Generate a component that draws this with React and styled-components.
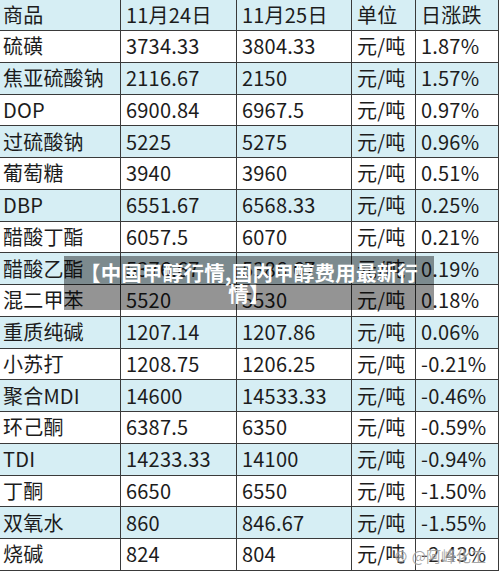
import React from "react";
import styled, { createGlobalStyle } from "styled-components";

const Global = createGlobalStyle`
  html, body { margin: 0; padding: 0; background: #ffffff; }
  body { width: 500px; height: 573px; overflow: hidden; }
`;

const Page = styled.div`
  position: relative;
  width: 500px;
  height: 573px;
  overflow: hidden;
  background: #ffffff;
  font-family: "Noto Sans CJK SC", "Noto Sans", sans-serif;
`;

const Table = styled.div`
  display: grid;
  grid-template-columns: 121px 116px 115px 64px 83px;
  grid-template-rows: 31px repeat(17, 31.75px);
`;

const Cell = styled.div`
  box-sizing: border-box;
  border-right: 1px solid #3a3a3a;
  border-bottom: 1px solid #3a3a3a;
  background: ${(p) => (p.$shade ? "#d6eef4" : "#ffffff")};
  color: #1c1c1c;
  font-size: 20px;
  line-height: 1;
  padding-left: ${(p) => (p.$first ? 3 : 5)}px;
  display: flex;
  align-items: center;
  white-space: nowrap;
  overflow: hidden;
  letter-spacing: 0.2px;
`;

const Overlay = styled.div`
  position: absolute;
  left: 64px;
  top: 256px;
  width: 370px;
  height: 54px;
  box-sizing: border-box;
  background: rgba(0, 0, 0, 0.42);
  color: #ffffff;
  font-weight: 700;
  font-size: 20.5px;
  line-height: 21px;
  text-align: center;
  padding-top: 6px;
  letter-spacing: 0.2px;
  white-space: nowrap;
`;

const Watermark = styled.div`
  position: absolute;
  right: 14px;
  top: 545px;
  font-size: 15px;
  color: rgba(140, 140, 140, 0.75);
  text-shadow: 0 0 2px rgba(255, 255, 255, 0.9);
  font-family: "Noto Sans CJK SC", sans-serif;
`;

const header = ["商品", "11月24日", "11月25日", "单位", "日涨跌"];
const rows = [
  ["硫磺", "3734.33", "3804.33", "元/吨", "1.87%"],
  ["焦亚硫酸钠", "2116.67", "2150", "元/吨", "1.57%"],
  ["DOP", "6900.84", "6967.5", "元/吨", "0.97%"],
  ["过硫酸钠", "5225", "5275", "元/吨", "0.96%"],
  ["葡萄糖", "3940", "3960", "元/吨", "0.51%"],
  ["DBP", "6551.67", "6568.33", "元/吨", "0.25%"],
  ["醋酸丁酯", "6057.5", "6070", "元/吨", "0.21%"],
  ["醋酸乙酯", "5376.67", "5386.67", "元/吨", "0.19%"],
  ["混二甲苯", "5520", "5530", "元/吨", "0.18%"],
  ["重质纯碱", "1207.14", "1207.86", "元/吨", "0.06%"],
  ["小苏打", "1208.75", "1206.25", "元/吨", "-0.21%"],
  ["聚合MDI", "14600", "14533.33", "元/吨", "-0.46%"],
  ["环己酮", "6387.5", "6350", "元/吨", "-0.59%"],
  ["TDI", "14233.33", "14100", "元/吨", "-0.94%"],
  ["丁酮", "6650", "6550", "元/吨", "-1.50%"],
  ["双氧水", "860", "846.67", "元/吨", "-1.55%"],
  ["烧碱", "824", "804", "元/吨", "-2.43%"],
];

export default function App() {
  return (
    <Page>
      <Global />
      <Table>
        {header.map((h, i) => (
          <Cell key={"h" + i} $shade $first={i === 0}>
            {h}
          </Cell>
        ))}
        {rows.map((r, ri) =>
          r.map((c, ci) => (
            <Cell key={ri + "-" + ci} $shade={ri % 2 === 1} $first={ci === 0}>
              {c}
            </Cell>
          ))
        )}
      </Table>
      <Overlay>
        【中国甲醇行情,国内甲醇费用最新行
        <br />
        情】
      </Overlay>
      <Watermark>⊗ @阿峰化工</Watermark>
    </Page>
  );
}
